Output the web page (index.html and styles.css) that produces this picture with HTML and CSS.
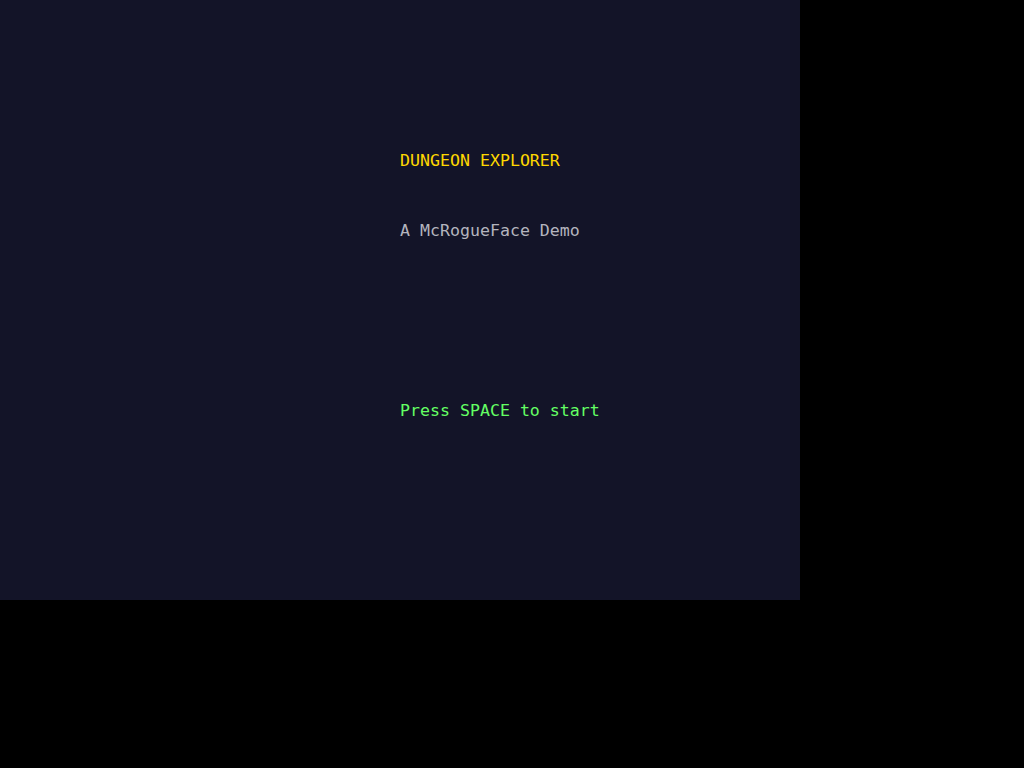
FILE: index.html
```html
<!DOCTYPE html>
<html>
<head>
<meta charset="utf-8">
<link rel="stylesheet" href="styles.css">
</head>
<body>
<div class="screen">
  <div class="title">DUNGEON EXPLORER</div>
  <div class="subtitle">A McRogueFace Demo</div>
  <div class="prompt">Press SPACE to start</div>
</div>
</body>
</html>
```
FILE: styles.css
```css
html, body {
  margin: 0;
  padding: 0;
  background: #000;
  width: 1024px;
  height: 768px;
  overflow: hidden;
}
.screen {
  width: 800px;
  height: 600px;
  box-sizing: border-box;
  padding: 151px 0 0 400px;
  background: #131428;
  font-family: "DejaVu Sans Mono", "Liberation Mono", monospace;
  font-size: 16.6px;
  line-height: 20px;
}
.title, .subtitle, .prompt { white-space: pre; }
.title { color: #ffd800; }
.subtitle { color: #b4b4be; margin-top: 50px; }
.prompt { color: #64ff64; margin-top: 160px; }
```
